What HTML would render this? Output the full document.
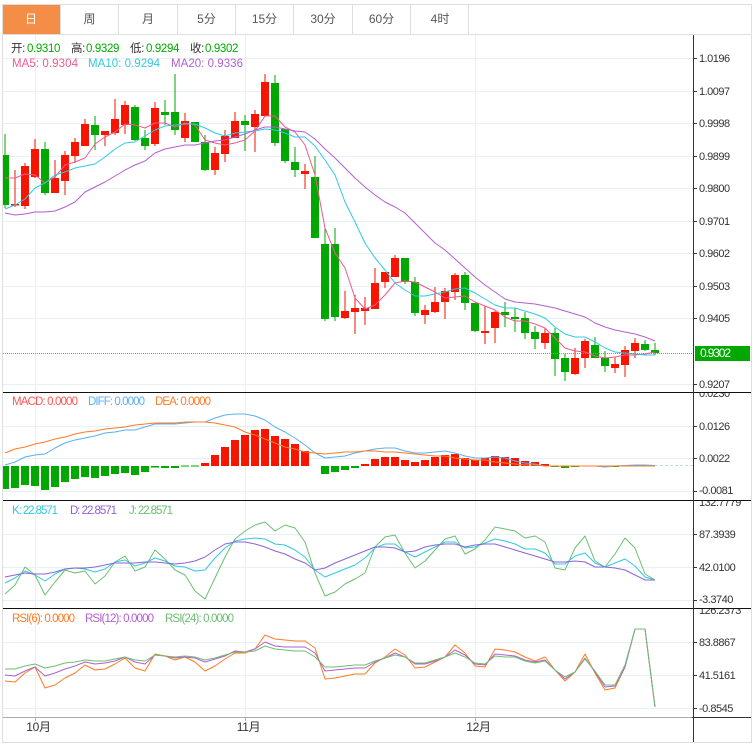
<!DOCTYPE html>
<html>
<head>
<meta charset="utf-8">
<title>K线图</title>
<style>
html,body{margin:0;padding:0;background:#fff;width:756px;height:748px;overflow:hidden}
svg{display:block}
text{font-family:"Liberation Sans","Noto Sans CJK SC",sans-serif;font-size:11.5px;letter-spacing:-.35px}
.tab{font-size:12px;fill:#555;text-anchor:middle;letter-spacing:0}
.ax{font-size:11px;fill:#333;letter-spacing:-.5px}
.dt{font-size:12px;fill:#333;text-anchor:middle;letter-spacing:-.3px}
.lg{letter-spacing:0}
polyline{fill:none;stroke-width:1;stroke-linejoin:round}
</style>
</head>
<body>
<svg width="756" height="748" viewBox="0 0 756 748" xmlns="http://www.w3.org/2000/svg">
<defs><clipPath id="c"><rect x="3" y="35" width="690" height="682"/></clipPath></defs>

<!-- frame -->
<rect x="2.5" y="4.5" width="749" height="738" fill="#fff" stroke="#dedede"/>
<rect x="3" y="5" width="57" height="29" fill="#f48d45"/>
<path d="M3 34.5H751M60.5 5V34M118.5 5V34M177.5 5V34M235.5 5V34M293.5 5V34M352.5 5V34M410.5 5V34M468.5 5V34" stroke="#dedede" fill="none"/>
<text class="tab" x="31" y="23" style="fill:#fff">日</text>
<text class="tab" x="89.500" y="23">周</text>
<text class="tab" x="148" y="23">月</text>
<text class="tab" x="206.500" y="23">5分</text>
<text class="tab" x="264.500" y="23">15分</text>
<text class="tab" x="323" y="23">30分</text>
<text class="tab" x="381.500" y="23">60分</text>
<text class="tab" x="440" y="23">4时</text>

<!-- grid -->
<path d="M3 58.500H693M3 91.500H693M3 123.500H693M3 156.500H693M3 188.500H693M3 221.500H693M3 253.500H693M3 286.500H693M3 318.500H693M3 384.500H693M3 426.500H693M3 458.500H693M3 491.500H693M3 534.500H693M3 567.500H693M3 600.500H693M3 642.500H693M3 675.500H693M3 708.500H693M35.500 35V717M245.500 35V717M475.500 35V717" stroke="#e9f0f5" fill="none"/>

<g clip-path="url(#c)">
<!-- wicks -->
<path stroke="#f51500" fill="none" d="M15 170V207M25 163V209M35 139V178M55 160V193M65 151V195M75 138V163M85 119V146M105 131V146M115 99V135M125 101V134M155 102V146M185 113V142M215 147V175M225 130V162M235 112V138M255 110V152M265 74V116M305 164V189M345 291V319M355 295V334M365 297V325M375 268V309M385 272V288M395 255V277M425 305V324M435 287V313M445 288V319M455 273V300M485 306V344M495 311V343M545 328V349M575 348V375M585 339V368M615 357V373M625 346V377M635 338V358"/>
<path stroke="#00a800" fill="none" d="M5 134V208M45 142V195M95 116V150M135 105V141M145 130V150M165 100V125M175 74V135M195 122V142M205 135V171M245 115V151M275 75V146M285 129V163M295 147V177M315 156V238M325 228V321M335 228V321M405 258V284M415 277V316M465 272V310M475 303V332M505 302V327M515 308V332M525 312V339M535 326V349M555 328V376M565 354V381M595 337V358M605 351V372M645 340V351M655 343V355"/>
<!-- bodies -->
<path fill="#f51500" d="M11 204h8v1.500h-8zM21 166h8v40h-8zM31 149h8v28h-8zM51 178h8v15h-8zM61 155h8v26h-8zM71 142h8v14h-8zM81 124h8v22h-8zM101 131h8v4h-8zM111 119h8v14h-8zM121 105h8v20h-8zM151 108h8v36h-8zM181 121h8v17h-8zM211 153h8v17h-8zM221 136h8v18h-8zM231 121h8v17h-8zM251 114h8v13h-8zM261 82h8v34h-8zM301 171h8v3h-8zM341 311h8v7h-8zM351 308h8v4h-8zM361 308h8v3h-8zM371 283h8v26h-8zM381 272h8v10h-8zM391 258h8v19h-8zM421 310h8v5h-8zM431 302h8v10h-8zM441 291h8v11h-8zM451 275h8v17h-8zM481 331h8v2h-8zM491 312h8v16h-8zM541 333h8v10h-8zM571 358h8v16h-8zM581 341h8v17h-8zM611 364h8v4h-8zM621 350h8v15h-8zM631 343h8v8h-8z"/>
<path fill="#00a800" d="M1 155h8v50h-8zM41 149h8v44h-8zM91 125h8v10h-8zM131 107h8v33h-8zM141 138h8v8h-8zM161 112h8v3h-8zM171 112h8v18h-8zM191 122h8v20h-8zM201 142h8v28h-8zM241 121h8v4h-8zM271 83h8v60h-8zM281 129h8v32h-8zM291 162h8v8h-8zM311 177h8v61h-8zM321 244h8v75h-8zM331 244h8v73h-8zM401 258h8v24h-8zM411 282h8v31h-8zM461 275h8v28h-8zM471 303h8v28h-8zM501 312h8v3h-8zM511 317h8v2h-8zM521 318h8v15h-8zM531 332h8v7h-8zM551 333h8v26h-8zM561 358h8v14h-8zM591 345h8v13h-8zM601 358h8v8h-8zM641 344h8v6h-8zM651 350h8v3h-8z"/>
<!-- MA -->
<polyline stroke="#f2598c" points="5,178 15,178 25,174 35,175 45,183 55,177 65,165 75,162 85,158 95,144 105,137 115,132 125,124 135,125 145,128 155,123 165,123 175,127 185,123 195,125 205,140 215,143 225,145 235,143 245,140 255,131 265,116 275,116 285,127 295,132 305,145 315,175 325,228 335,253 345,268 355,298 365,309 375,305 385,295 395,283 405,281 415,282 425,287 435,292 445,298 455,297 465,296 475,302 485,306 495,310 505,317 515,321 525,321 535,324 545,328 555,338 565,348 575,351 585,352 595,356 605,358 615,357 625,355 635,355 645,354 655,352"/>
<polyline stroke="#31c8e0" points="5,209 15,205 25,199 35,188 45,183 55,175 65,172 75,168 85,166 95,164 105,157 115,149 125,143 135,142 145,136 155,130 165,126 175,125 185,124 195,124 205,128 215,133 225,136 235,133 245,132 255,131 265,129 275,130 285,133 295,137 305,137 315,146 325,160 335,175 345,202 355,222 365,243 375,258 385,270 395,283 405,290 415,296 425,296 435,294 445,292 455,289 465,288 475,293 485,299 495,305 505,308 515,308 525,311 535,314 545,318 555,327 565,334 575,337 585,337 595,342 605,348 615,352 625,353 635,354 645,355 655,355"/>
<polyline stroke="#b35fd0" points="5,213 15,215 25,214 35,212 45,212 55,211 65,207 75,202 85,192 95,187 105,182 115,176 125,170 135,165 145,161 155,153 165,149 175,147 185,145 195,145 205,143 215,141 225,140 235,137 245,134 255,130 265,127 275,127 285,129 295,131 305,132 315,139 325,149 335,158 345,168 355,178 365,187 375,195 385,202 395,207 405,213 415,223 425,233 435,243 445,250 455,259 465,268 475,277 485,285 495,292 505,299 515,302 525,303 535,304 545,306 555,308 565,311 575,314 585,317 595,323 605,327 615,330 625,332 635,334 645,337 655,341"/>

<!-- price line -->
<path d="M3 353.500H695" stroke="#4db84d" stroke-dasharray="1 1" fill="none"/>

<!-- MACD -->
<path d="M655 465.500H693" stroke="#bcdcf0" stroke-dasharray="3 2" fill="none"/>
<path fill="#00a800" d="M1 466h8v23h-8zM11 466h8v22h-8zM21 466h8v19h-8zM31 466h8v20h-8zM41 466h8v24h-8zM51 466h8v21h-8zM61 466h8v16h-8zM71 466h8v13h-8zM81 466h8v11h-8zM91 466h8v12h-8zM101 466h8v10h-8zM111 466h8v8h-8zM121 466h8v7h-8zM131 466h8v9h-8zM141 466h8v6h-8zM151 466h8v1.500h-8zM161 466h8v2h-8zM171 466h8v2h-8zM181 465.500h8v1h-8zM191 465.500h8v1h-8zM321 466h8v8h-8zM331 466h8v6h-8zM341 466h8v4h-8zM351 466h8v2h-8zM551 466h8v1h-8zM561 466h8v2h-8zM571 466h8v1h-8zM601 466h8v1h-8zM611 466h8v1h-8z"/>
<path fill="#f51500" d="M201 463h8v3h-8zM211 455h8v11h-8zM221 447h8v19h-8zM231 440h8v26h-8zM241 435h8v31h-8zM251 430h8v36h-8zM261 429h8v37h-8zM271 436h8v30h-8zM281 439h8v27h-8zM291 444h8v22h-8zM301 451h8v15h-8zM361 464h8v2h-8zM371 459h8v7h-8zM381 457h8v9h-8zM391 457h8v9h-8zM401 460h8v6h-8zM411 462h8v4h-8zM421 460h8v6h-8zM431 457h8v9h-8zM441 455h8v11h-8zM451 454h8v12h-8zM461 458h8v8h-8zM471 460h8v6h-8zM481 458h8v8h-8zM491 456h8v10h-8zM501 457h8v9h-8zM511 458h8v8h-8zM521 461h8v5h-8zM531 462h8v4h-8zM541 464h8v2h-8z"/>
<polyline stroke="#5ab0f5" points="5,465 15,462 25,457 35,455 45,454 55,448 65,443 75,440 85,438 95,436 105,433 115,432 125,430 135,430 145,427 155,424 165,424 175,424 185,423 195,422 205,422 215,418 225,415 235,414 245,414 255,416 265,420 275,427 285,432 295,438 305,445 315,453 325,458 335,457 345,456 355,453 365,451 375,449 385,448 395,448 405,451 415,453 425,453 435,452 445,451 455,453 465,456 475,458 485,458 495,457 505,458 515,461 525,463 535,464 545,466 555,466 565,466 575,466 585,466 595,466 605,467 615,466 625,465.500 635,465 645,465 655,465.500"/>
<polyline stroke="#ff7b24" points="5,453 15,449 25,447 35,444 45,442 55,439 65,437 75,434 85,432 95,431 105,429 115,428 125,427 135,425 145,424 155,423 165,423 175,423 185,422 195,422 205,422 215,423 225,425 235,427 245,432 255,435 265,439 275,443 285,447 295,449 305,452 315,453 325,454 335,453 345,452 355,452 365,451 375,451 385,452 395,452 405,453 415,454 425,455 435,456 445,456 455,458 465,459 475,460 485,460 495,462 505,463 515,464 525,465 535,465 545,466 555,466 565,466 575,466 585,466 595,466 605,466 615,466 625,466 635,466 645,466 655,466"/>

<!-- KDJ -->
<polyline stroke="#6cbf70" points="5,594 15,585 25,567 35,575 45,595 55,582 65,570 75,573 85,571 95,584 105,576 115,562 125,556 135,571 145,567 155,550 165,559 175,570 185,575 195,591 205,599 215,578 225,557 235,539 245,531 255,525 265,522 275,531 285,525 295,528 305,542 315,573 325,596 335,592 345,584 355,579 365,573 375,547 385,537 395,535 405,553 415,568 425,561 435,550 445,539 455,536 465,554 475,549 485,540 495,527 505,529 515,531 525,538 535,536 545,542 555,568 565,570 575,548 585,536 595,561 605,567 615,554 625,538 635,548 645,574 655,580"/>
<polyline stroke="#31c8e0" points="5,583 15,578 25,571 35,575 45,581 55,574 65,569 75,568 85,569 95,572 105,569 115,562 125,560 135,566 145,563 155,558 165,561 175,566 185,567 195,571 205,570 215,558 225,548 235,541 245,539 255,538 265,539 275,544 285,545 295,550 305,557 315,570 325,577 335,573 345,569 355,565 365,558 375,548 385,544 395,544 405,552 415,557 425,552 435,547 445,542 455,542 465,548 475,547 485,543 495,539 505,541 515,544 525,549 535,549 545,553 555,564 565,564 575,556 585,553 595,563 605,567 615,563 625,559 635,566 645,577 655,580"/>
<polyline stroke="#8f63d2" points="5,577 15,575 25,573 35,574 45,574 55,572 65,569 75,568 85,568 95,567 105,565 115,563 125,563 135,563 145,562 155,562 165,563 175,564 185,563 195,561 205,557 215,550 225,544 235,542 245,542 255,544 265,547 275,551 285,554 295,559 305,563 315,570 325,568 335,563 345,559 355,555 365,551 375,547 385,547 395,548 405,552 415,551 425,547 435,545 445,544 455,544 465,547 475,545 485,544 495,544 505,547 515,550 525,553 535,556 545,559 555,562 565,562 575,561 585,562 595,567 605,567 615,568 625,570 635,575 645,580 655,580"/>

<!-- RSI -->
<polyline stroke="#ff7b24" points="5,681 15,682 25,673 35,667 45,688 55,685 65,678 75,673 85,665 95,670 105,669 115,664 125,658 135,668 145,671 155,654 165,656 175,660 185,657 195,662 205,671 215,666 225,659 235,653 245,653 255,649 265,635 275,639 285,640 295,641 305,641 315,648 325,679 335,678 345,676 355,674 365,674 375,663 385,657 395,649 405,655 415,668 425,667 435,662 445,657 455,645 465,653 475,666 485,667 495,649 505,650 515,652 525,657 535,661 545,657 555,670 565,681 575,672 585,654 595,673 605,690 615,688 625,667 635,629 645,629 655,707"/>
<polyline stroke="#b35fd0" points="5,675 15,676 25,671 35,667 45,676 55,673 65,669 75,666 85,662 95,664 105,663 115,661 125,657 135,662 145,664 155,655 165,656 175,658 185,657 195,658 205,662 215,659 225,656 235,651 245,652 255,649 265,642 275,646 285,647 295,647 305,647 315,653 325,671 335,670 345,669 355,668 365,668 375,662 385,658 395,653 405,657 415,664 425,664 435,661 445,657 455,650 465,655 475,664 485,665 495,654 505,655 515,656 525,660 535,662 545,660 555,670 565,679 575,672 585,658 595,672 605,687 615,686 625,667 635,629 645,629 655,707"/>
<polyline stroke="#6cbf70" points="5,669 15,669 25,666 35,664 45,668 55,666 65,663 75,662 85,660 95,661 105,661 115,659 125,657 135,660 145,661 155,655 165,656 175,657 185,656 195,657 205,660 215,658 225,655 235,652 245,652 255,651 265,646 275,649 285,650 295,651 305,651 315,657 325,667 335,667 345,666 355,665 365,665 375,661 385,658 395,655 405,657 415,663 425,663 435,660 445,657 455,653 465,657 475,663 485,664 495,656 505,657 515,657 525,661 535,663 545,661 555,670 565,677 575,672 585,659 595,671 605,685 615,685 625,665 635,629 645,629 655,707"/>
</g>

<!-- separators -->
<path d="M3 392.500H751M3 500.500H751M3 608.500H751" stroke="#111" fill="none"/>
<path d="M3 717.500H692" stroke="#aaa" fill="none"/>
<path d="M692 717.500H751M693.500 35V742" stroke="#333" fill="none"/>
<path d="M694 58.500h3M694 91.500h3M694 123.500h3M694 156.500h3M694 188.500h3M694 221.500h3M694 253.500h3M694 286.500h3M694 318.500h3M694 384.500h3M694 426.500h3M694 458.500h3M694 491.500h3M694 534.500h3M694 567.500h3M694 600.500h3M694 642.500h3M694 675.500h3M694 708.500h3" stroke="#333" fill="none"/>
<path d="M35.500 718v3M245.500 718v3M475.500 718v3" stroke="#aaa" fill="none"/>

<!-- legends -->
<text x="11" y="52" fill="#333">开:</text><text x="27" y="52" fill="#0a0">0.9310</text>
<text x="71" y="52" fill="#333">高:</text><text x="86" y="52" fill="#0a0">0.9329</text>
<text x="130" y="52" fill="#333">低:</text><text x="146" y="52" fill="#0a0">0.9294</text>
<text x="190" y="52" fill="#333">收:</text><text x="205" y="52" fill="#0a0">0.9302</text>
<text class="lg" x="12" y="67" fill="#f2598c" textLength="66">MA5: 0.9304</text>
<text class="lg" x="88" y="67" fill="#31c8e0" textLength="72">MA10: 0.9294</text>
<text class="lg" x="171" y="67" fill="#b35fd0" textLength="72">MA20: 0.9336</text>
<text class="lg" x="12" y="405" fill="#f55" textLength="66">MACD: 0.0000</text>
<text class="lg" x="88" y="405" fill="#5ab0f5" textLength="57">DIFF: 0.0000</text>
<text class="lg" x="155" y="405" fill="#ff7b24" textLength="56">DEA: 0.0000</text>
<text class="lg" x="12" y="514" fill="#31c8e0" textLength="46">K: 22.8571</text>
<text class="lg" x="70" y="514" fill="#8f63d2" textLength="47">D: 22.8571</text>
<text class="lg" x="129" y="514" fill="#6cbf70" textLength="44">J: 22.8571</text>
<text class="lg" x="12" y="622" fill="#ff7b24" textLength="63">RSI(6): 0.0000</text>
<text class="lg" x="85" y="622" fill="#b35fd0" textLength="69">RSI(12): 0.0000</text>
<text class="lg" x="165" y="622" fill="#6cbf70" textLength="69">RSI(24): 0.0000</text>

<!-- axis labels -->
<text class="ax" x="699" y="62">1.0196</text>
<text class="ax" x="699" y="95">1.0097</text>
<text class="ax" x="699" y="127">0.9998</text>
<text class="ax" x="699" y="160">0.9899</text>
<text class="ax" x="699" y="192">0.9800</text>
<text class="ax" x="699" y="225">0.9701</text>
<text class="ax" x="699" y="257">0.9602</text>
<text class="ax" x="699" y="290">0.9503</text>
<text class="ax" x="699" y="322">0.9405</text>
<text class="ax" x="699" y="388">0.9207</text>
<rect x="695" y="346" width="55" height="15" fill="#00a800"/>
<text class="lg" x="700" y="357" fill="#fff" style="font-size:12px" textLength="31">0.9302</text>
<svg x="694" y="393" width="57" height="12" viewBox="694 393 57 12"><text class="ax" x="699" y="397">0.0230</text></svg>
<text class="ax" x="699" y="430">0.0126</text>
<text class="ax" x="699" y="462">0.0022</text>
<text class="ax" x="699" y="494">-0.0081</text>
<svg x="694" y="501" width="57" height="12" viewBox="694 501 57 12"><text class="ax" x="699" y="506">132.7779</text></svg>
<text class="ax" x="699" y="538">87.3939</text>
<text class="ax" x="699" y="571">42.0100</text>
<text class="ax" x="699" y="603">-3.3740</text>
<svg x="694" y="609" width="57" height="12" viewBox="694 609 57 12"><text class="ax" x="699" y="614">126.2373</text></svg>
<text class="ax" x="699" y="646">83.8867</text>
<text class="ax" x="699" y="679">41.5161</text>
<text class="ax" x="699" y="712">-0.8545</text>

<text class="dt" x="38.500" y="731">10月</text>
<text class="dt" x="248.500" y="731">11月</text>
<text class="dt" x="478.500" y="731">12月</text>
</svg>
</body>
</html>
